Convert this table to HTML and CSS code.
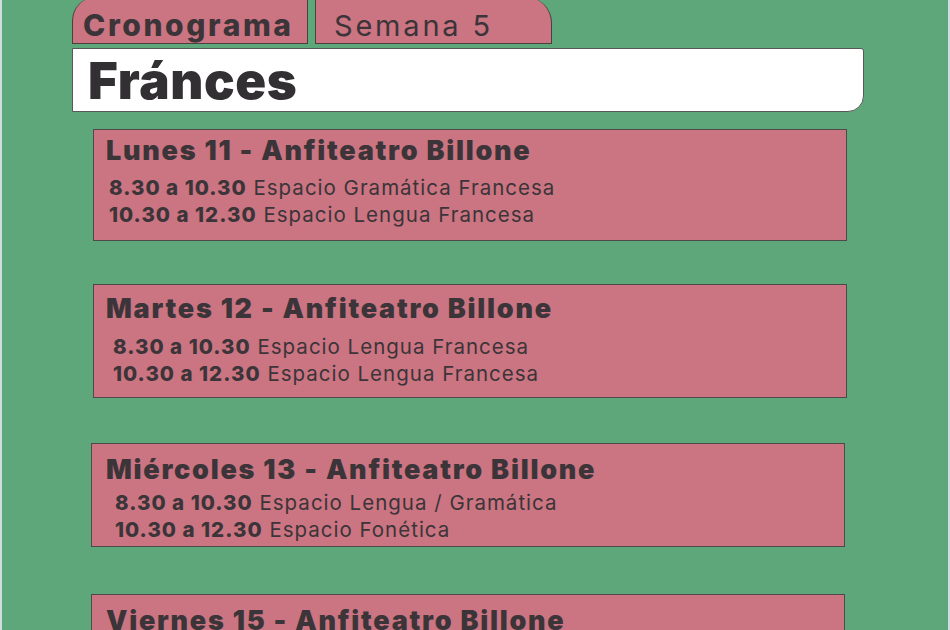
FILE: index.html
```html
<!DOCTYPE html>
<html lang="es">
<head>
<meta charset="utf-8">
<title>Cronograma - Fránces</title>
<link rel="stylesheet" href="styles.css">
</head>
<body>
<div class="page">
  <div class="tabs">
    <div class="tab tab-main">Cronograma</div>
    <div class="tab tab-week">Semana 5</div>
  </div>
  <div class="banner">Fránces</div>
  <div class="cards">
    <section class="card card-1">
      <h2 class="card-title">Lunes 11 - Anfiteatro Billone</h2>
      <div class="rows rows-1">
        <p class="row"><b>8.30 a 10.30</b> Espacio Gramática Francesa</p>
        <p class="row"><b>10.30 a 12.30</b> Espacio Lengua Francesa</p>
      </div>
    </section>
    <section class="card card-2">
      <h2 class="card-title">Martes 12 - Anfiteatro Billone</h2>
      <div class="rows rows-2">
        <p class="row"><b>8.30 a 10.30</b> Espacio Lengua Francesa</p>
        <p class="row"><b>10.30 a 12.30</b> Espacio Lengua Francesa</p>
      </div>
    </section>
    <section class="card card-3">
      <h2 class="card-title">Miércoles 13 - Anfiteatro Billone</h2>
      <div class="rows rows-3">
        <p class="row"><b>8.30 a 10.30</b> Espacio Lengua / Gramática</p>
        <p class="row"><b>10.30 a 12.30</b> Espacio Fonética</p>
      </div>
    </section>
    <section class="card card-4">
      <h2 class="card-title">Viernes 15 - Anfiteatro Billone</h2>
    </section>
  </div>
</div>
</body>
</html>
```

FILE: styles.css
```css
html, body {
  margin: 0;
  padding: 0;
  height: 100%;
  overflow: hidden;
}
body {
  background: #5da77b;
  font-family: Inter, "Noto Sans", sans-serif;
  color: #3b3438;
}
.page {
  height: 630px;
  box-sizing: border-box;
  border-left: 2px solid #cfdde3;
  border-right: 2px solid #cfdde3;
  padding-left: 70px;
  overflow: hidden;
}
.tabs {
  display: flex;
  gap: 7px;
  margin-top: -3px;
}
.tab {
  box-sizing: border-box;
  height: 47px;
  background: #cb7482;
  border: 1.5px solid #4a4042;
  border-top: none;
  display: flex;
  align-items: flex-end;
  padding-bottom: 3px;
}
.tab-main {
  width: 236px;
  border-top-left-radius: 24px;
  font-weight: 800;
  font-size: 30px;
  line-height: 30px;
  padding-left: 10px;
  letter-spacing: 2.6px;
}
.tab-week {
  width: 237px;
  border-top-right-radius: 26px;
  font-weight: 400;
  font-size: 29px;
  line-height: 29px;
  padding-left: 18px;
  letter-spacing: 2.8px;
}
.banner {
  box-sizing: border-box;
  margin-top: 4px;
  width: 792px;
  height: 64px;
  background: #ffffff;
  border: 1.5px solid #555a57;
  border-radius: 0 3px 16px 0;
  font-weight: 900;
  font-size: 51px;
  line-height: 60px;
  padding-top: 2px;
  padding-left: 15px;
  letter-spacing: 0.6px;
  color: #333033;
}
.cards {
  padding-left: 21px;
}
.card {
  box-sizing: border-box;
  width: 754px;
  background: #cb7482;
  border: 1px solid #4e4a4b;
  padding-left: 12px;
}
.card-1 { margin-top: 17px; height: 112px; padding-top: 4px; }
.card-2 { margin-top: 43px; height: 114px; padding-top: 7px; }
.card-3 { margin-top: 45px; height: 104px; margin-left: -2px; padding-left: 14px; padding-top: 9px; }
.card-4 { margin-top: 47px; height: 110px; margin-left: -2px; padding-left: 14px; padding-top: 9px; }
.card-title {
  margin: 0;
  font-weight: 900;
  font-size: 27px;
  line-height: 34px;
  letter-spacing: 1.75px;
}
.rows-1 { padding-left: 3px; margin-top: 6px; }
.rows-2 { padding-left: 7px; margin-top: 7px; }
.rows-3 { padding-left: 9px; margin-top: 2px; }
.row {
  margin: 0;
  font-size: 20.5px;
  line-height: 27px;
  font-weight: 400;
  letter-spacing: 1px;
}
.row b {
  font-weight: 800;
}
```
